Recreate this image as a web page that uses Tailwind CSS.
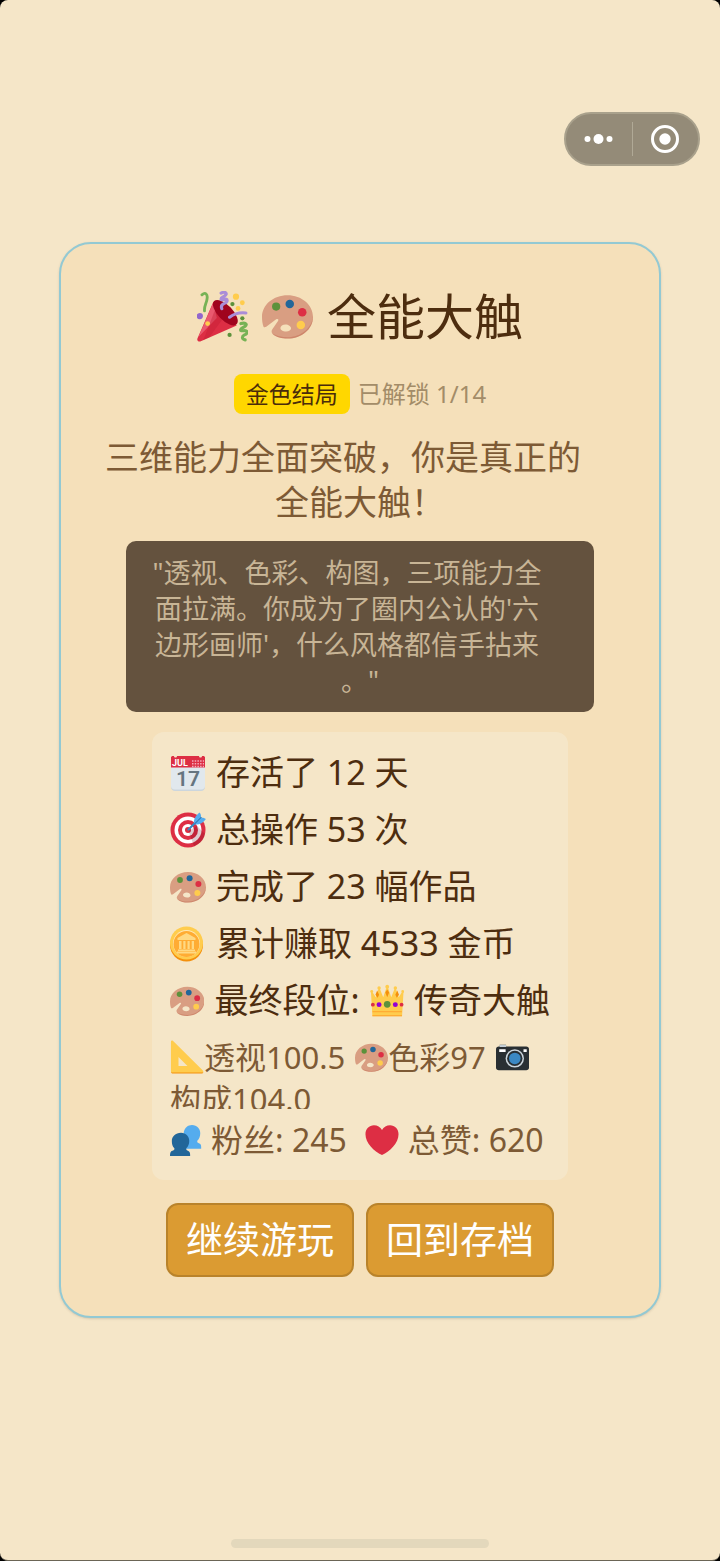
<!DOCTYPE html>
<html lang="zh-CN">
<head>
  <meta charset="UTF-8">
  <meta name="viewport" content="width=device-width, initial-scale=1.0">
  <title>全能大触</title>
  <script src="https://cdn.jsdelivr.net/npm/@tailwindcss/browser@4"></script>
</head>
<body class="bg-black font-['Noto_Sans','Noto_Sans_CJK_SC',sans-serif]">
  <!-- Palette is used in several rows -->
  <svg class="hidden" aria-hidden="true">
    <symbol id="palette" viewBox="0 0 36 36">
      <path fill="#d99e82" fill-rule="evenodd" d="M18 3C8 3 0 9.800 0 18.200c0 2.500.3 5 1 6.800.4.9 1.200.7 2 .3l7-5.300c1.200-.7 2 0 1.300 1.200L7.300 27c-.9 1.300-.6 2.500.5 3.700C10 32.600 14 33.600 18 33.600c10 0 18-6.800 18-15.300S28 3 18 3zm-1 25.600c-2.200 0-4-1.100-4-2.500s1.600-2.500 3.600-2.500 3.900 1.300 3.900 2.700-1.400 2.300-3.500 2.300z"/>
      <path fill="#c1694f" d="M7.300 30c2.600 2.600 6.600 3.600 10.700 3.600 10 0 18-6.800 18-15.300v-.7C35.500 25.700 27.700 32.600 18 32.600c-4.200 0-8-.9-10.700-2.600z" opacity=".45"/>
      <circle cx="10" cy="11" r="2.900" fill="#5c913b"/>
      <circle cx="19.600" cy="9.200" r="3" fill="#226699"/>
      <circle cx="28.400" cy="15" r="3" fill="#dd2e44"/>
      <circle cx="27.400" cy="24" r="3" fill="#ffcc4d"/>
    </symbol>
  </svg>

  <main class="flex min-h-screen flex-col rounded-lg border-b border-[#6b6556] bg-[#f5e6c8]">
    <header class="flex justify-end px-5 pt-[112px]">
      <div class="flex h-[54px] w-[136px] items-center rounded-full border-2 border-[#a9a18c] bg-[#948b78]">
        <button class="flex h-full flex-1 items-center justify-center" aria-label="更多">
          <svg width="30" height="12" viewBox="0 0 30 12" fill="#fff"><circle cx="3.500" cy="6" r="3"/><circle cx="14.500" cy="6" r="5"/><circle cx="25.500" cy="6" r="3"/></svg>
        </button>
        <span class="h-[34px] w-px bg-[#b0a996]"></span>
        <button class="flex h-full flex-1 items-center justify-center" aria-label="关闭">
          <svg width="28" height="28" viewBox="0 0 28 28"><circle cx="14" cy="14" r="12.500" fill="none" stroke="#fff" stroke-width="3"/><circle cx="14" cy="14" r="5.700" fill="#fff"/></svg>
        </button>
      </div>
    </header>

    <section class="mx-[59px] mt-[76px] flex flex-col items-center rounded-[32px] border-2 border-[#93c9d3] bg-[#f5e0ba] pt-[42px] pb-[39px] shadow-sm">
      <h1 class="flex h-[60px] items-center gap-[14px] text-[49px] leading-[60px] text-[#4d2d0f]">
        <svg class="size-[51px]" viewBox="0 0 36 36" aria-hidden="true">
          <path fill="#dd2e44" d="M11.600 7.500L.3 33.600c-.5 1.300.7 2.400 2 2L28 24.300z"/>
          <path fill="#ea596e" d="M11.600 8L1 32.500 14 19z"/>
          <path fill="#be1931" d="M13 12.500L4.500 34.500l4-1.700L18 20z" opacity=".35"/>
          <ellipse cx="20" cy="15.300" rx="11.400" ry="5.200" fill="#a0041e" transform="rotate(46 20 15.300)"/>
          <path fill="none" stroke="#77b255" stroke-width="2" stroke-linecap="round" d="M3.500 2.700C6 .5 7.600 2.300 7.100 5.500 6.700 9 5 10 5.300 14"/>
          <path fill="none" stroke="#aa8dd8" stroke-width="2.200" stroke-linecap="round" stroke-linejoin="round" d="M17 1.500c3-1.500 5 .5 2.500 2-3 1.500-3.500 3.500-.5 2.500 3-1 3 1.500.3 2.700-3 1.300-2 3-1.800 3.800M23 18.500c4-3 7-3.500 11.500-3"/>
          <path fill="none" stroke="#77b255" stroke-width="2.200" stroke-linecap="round" stroke-linejoin="round" d="M31 23c4-1 5 1 2 2.500-3 1.500-3 3 0 2.500 3-.5 3 2 .5 3-2 1-2 3 .5 3.500"/>
          <circle cx="2" cy="17.700" r="2.200" fill="#9266cc"/>
          <circle cx="27.500" cy="4" r="2.200" fill="#ffcc4d"/>
          <circle cx="32" cy="8.300" r="1.700" fill="#ffcc4d"/>
          <circle cx="29" cy="12.300" r="1.700" fill="#ffcc4d"/>
          <circle cx="7.500" cy="23" r="1.700" fill="#ffcc4d"/>
          <circle cx="25" cy="9.200" r="1.500" fill="#5c913b"/>
          <circle cx="32" cy="19.300" r="1.500" fill="#5c913b"/>
          <circle cx="23" cy="31" r="1.500" fill="#5c913b"/>
        </svg>
        <svg class="size-[51px]" aria-hidden="true"><use href="#palette"/></svg>
        <span>全能大触</span>
      </h1>

      <div class="mt-7 flex h-10 items-center gap-2">
        <span class="rounded-lg bg-[#ffd700] px-3 text-[23px] leading-10 text-[#4a2c0a]">金色结局</span>
        <span class="text-[24px] leading-10 text-[#a38c68]">已解锁 1/14</span>
      </div>

      <p class="mt-[21px] text-center text-[34px] leading-[45px] text-[#7d5a35]">
        <span class="block pr-[34px]">三维能力全面突破，你是真正的</span>
        <span class="block">全能大触！</span>
      </p>

      <blockquote class="mt-4 w-[468px] rounded-[10px] bg-[#64523e] pt-[14px] pb-[13px] text-center text-[27px] leading-9 text-[#c8b596]">
        <span class="block pr-[26px]">"透视、色彩、构图，三项能力全</span>
        <span class="block pr-[26px]">面拉满。你成为了圈内公认的'六</span>
        <span class="block pr-[26px]">边形画师'，什么风格都信手拈来</span>
        <span class="block">。"</span>
      </blockquote>

      <div class="mt-5 w-[416px] rounded-xl bg-[#f5e6c8] px-[18px] pt-3 pb-[19px] whitespace-nowrap">
        <ul class="text-[34px] leading-[57px] text-[#4d2d0f]">
          <li class="flex items-center gap-[10px]">
            <svg class="size-9" viewBox="0 0 36 36" aria-hidden="true">
              <path fill="#ccd6dd" d="M1 11h34v21c0 2-1.500 4-4 4H5c-2.500 0-4-2-4-4z"/>
              <path fill="#e1e8ed" d="M1 11h34v20c0 2-1.500 3.500-4 3.500H5c-2.500 0-4-1.500-4-3.500z"/>
              <path fill="#dd2e44" d="M1 2.500C1 1.500 2 1 3 1h1c0 2 3 2 3 0h22c0 2 3 2 3 0h1c1 0 2 .5 2 1.500V12.500H1z"/>
              <text x="2" y="11" font-size="9" font-weight="700" font-family="Roboto" fill="#fff">JUL</text>
              <path stroke="#f4abba" stroke-width="1.500" stroke-dasharray="1.500 1.200" d="M22 6h12M22 8.700h12M22 11.400h12"/>
              <text x="18" y="30.500" text-anchor="middle" font-size="21" font-weight="600" font-family="Roboto" fill="#66757f">17</text>
            </svg>
            <span>存活了 12 天</span>
          </li>
          <li class="flex items-center gap-[10px]">
            <svg class="size-9" viewBox="0 0 36 36" aria-hidden="true">
              <circle cx="18" cy="18" r="17.500" fill="#dd2e44"/>
              <circle cx="18" cy="18" r="13.500" fill="#fff"/>
              <circle cx="18" cy="18" r="10" fill="#dd2e44"/>
              <circle cx="18" cy="18" r="6" fill="#fff"/>
              <circle cx="18" cy="18" r="3" fill="#dd2e44"/>
              <path d="M18.500 19L27 14l8 8c-1 5-5 10-11 12z" fill="#58000e" opacity=".2"/>
              <path stroke="#3a87c2" stroke-width="2.200" stroke-linecap="round" d="M18.500 17.500l9-9"/>
              <path fill="#55acee" d="M24 11.500c-.5-4 1.500-8 5.500-11 1.300 1 1.800 3 1.500 5.300 2.300-.2 4 .3 4.800 1.500-3 4-6.800 5.800-10.800 5.200z"/>
              <path stroke="#269" stroke-width="1" d="M24.500 12l7-7"/>
            </svg>
            <span>总操作 53 次</span>
          </li>
          <li class="flex items-center gap-[10px]">
            <svg class="size-9" aria-hidden="true"><use href="#palette"/></svg>
            <span>完成了 23 幅作品</span>
          </li>
          <li class="flex items-center gap-[10px]">
            <svg class="size-9" viewBox="0 0 36 36" aria-hidden="true">
              <circle cx="16.500" cy="19" r="16.500" fill="#f4900c"/>
              <circle cx="16.500" cy="17" r="16.500" fill="#ffcc4d"/>
              <circle cx="16.500" cy="17.500" r="13.500" fill="#ffe8b6"/>
              <circle cx="16.500" cy="18" r="13" fill="#ffac33"/>
              <path fill="#ffd983" d="M16.500 7L7.500 12v2h18v-2zM9 15h2.500v8H9zm4.300 0h2.200v8h-2.200zm4.200 0h2.200v8h-2.200zm4.200 0H24v8h-2.300zM8 23.500h17V25H8zm-1 2h19v2H7z"/>
            </svg>
            <span>累计赚取 4533 金币</span>
          </li>
          <li class="flex items-center gap-[10px]">
            <svg class="size-9" aria-hidden="true"><use href="#palette"/></svg>
            <span>最终段位:</span>
            <svg class="size-9" viewBox="0 0 36 36" aria-hidden="true">
              <path fill="#ffcc4d" d="M2.500 34L1 8.500h1.500L6 14l3-9h1.200l3.600 9L17.500 3h1l3.700 11 3.600-9H27l3 9 3.500-5.500H35L33.500 34z"/>
              <circle cx="1.800" cy="8" r="1.500" fill="#ffcc4d"/><circle cx="9.500" cy="4.500" r="1.800" fill="#ffcc4d"/><circle cx="18" cy="3" r="2" fill="#ffcc4d"/><circle cx="26.500" cy="4.500" r="1.800" fill="#ffcc4d"/><circle cx="34.200" cy="8" r="1.500" fill="#ffcc4d"/>
              <path fill="#f4900c" d="M7.500 7l2 4.500-1.500 3-2.300-3zM16 9l2-3 2 3-2 5zM28.500 7l-2 4.500 1.500 3 2.300-3z"/>
              <path fill="#ffac33" d="M2.700 28.500h30.600v1.300H2.700zM2.600 32.700h30.800V34H2.600z"/>
              <circle cx="18" cy="21.500" r="3.500" fill="#5c913b"/>
              <circle cx="9.500" cy="21.800" r="2.600" fill="#9400d3"/><circle cx="26.500" cy="21.800" r="2.600" fill="#9400d3"/>
              <circle cx="3" cy="21.800" r="2" fill="#dd2e44"/><circle cx="33" cy="21.800" r="2" fill="#dd2e44"/>
            </svg>
            <span>传奇大触</span>
          </li>
        </ul>

        <div class="mt-[7px] h-[73px] overflow-hidden text-[31px] leading-[42px] text-[#7d5a35]">
          <div class="flex items-center">
            <svg class="size-[34px]" viewBox="0 0 36 36" aria-hidden="true">
              <path fill="#ffcc4d" fill-rule="evenodd" d="M1 2c0-1.500 1.200-2 2.300-1L34.500 32c1.500 1.500.8 3-1 3H3c-1.200 0-2-.8-2-2zm8 16v9.500h9.500z"/>
              <path fill="#f4900c" d="M1 33c0 1.500.8 2.500 2 2.500h30.500c1.200 0 1.800-.8 1.700-1.700-.3.500-.9.700-1.700.7H3c-1.200 0-2-.6-2-1.500z"/>
            </svg>
            <span>透视100.5</span>
            <svg class="ml-[10px] size-[33px]" aria-hidden="true"><use href="#palette"/></svg>
            <span>色彩97</span>
            <svg class="ml-[10px] size-[33px]" viewBox="0 0 36 36" aria-hidden="true">
              <path fill="#66757f" d="M4 4h7v5H4z"/>
              <path fill="#292f33" d="M3 6h30c1.700 0 3 1.200 3 3v20c0 1.800-1.300 3-3 3H3c-1.700 0-3-1.200-3-3V9c0-1.800 1.300-3 3-3z"/>
              <path fill="#ccd6dd" d="M4 4.500h7v2H4z"/>
              <path fill="#fff" d="M3.500 9h7v3h-7zM30 9h3.500v3H30z"/>
              <circle cx="20.500" cy="19" r="10" fill="#ccd6dd"/>
              <circle cx="20.500" cy="19" r="8.400" fill="#292f33"/>
              <circle cx="20.500" cy="19" r="6.300" fill="#3b88c3"/>
            </svg>
          </div>
          <div>构成104.0</div>
        </div>

        <div class="mt-[10px] flex items-center text-[32px] leading-[42px] text-[#7d5a35]">
          <svg class="mr-2 size-[33px]" viewBox="0 0 36 36" aria-hidden="true">
            <path fill="#55acee" d="M24 1c5.500 0 9 4 9 9 0 3.500-1.200 6.200-3 8-.8 1.200-.3 2.500 1.500 3 1.900.6 2.500 1.700 2.500 4v2H15V9c1-5 4.500-8 9-8z"/>
            <path fill="#226699" d="M12 9.500c5.500 0 9 4 9 9 0 3.300-1.200 6-3 7.800-.8 1.200-.2 2.400 1.500 2.900 2.200.7 2.500 2.500 2.500 5.800H0c0-3.600.5-5.200 2.700-5.800 2-.5 2.800-1.700 1.800-2.900-1.800-1.800-2.500-4.500-2.500-7.800 0-5 4-9 10-9z"/>
          </svg>
          <span>粉丝: 245</span>
          <svg class="mr-[9px] ml-[18px] size-[34px]" viewBox="0 0 36 36" aria-hidden="true">
            <path fill="#dd2e44" d="M35.500 11.800c0-5.300-4-9.300-9-9.300-3.500 0-6.800 2-8.500 5-1.700-3-5-5-8.500-5-5 0-9 4-9 9.300C.5 21.500 9.500 29.500 18 34c8.500-4.500 17.500-12.500 17.500-22.200z"/>
          </svg>
          <span>总赞: 620</span>
        </div>
      </div>

      <div class="mt-[23px] flex gap-3 text-[37px] leading-[70px] text-white">
        <button class="rounded-xl border-2 border-[#b9832b] bg-[#db9b32] px-[18px]">继续游玩</button>
        <button class="rounded-xl border-2 border-[#b9832b] bg-[#db9b32] px-[18px]">回到存档</button>
      </div>
    </section>

    <div class="mx-auto mt-auto mb-3 h-[9px] w-[258px] rounded-full bg-[#e3d8bc]"></div>
  </main>
</body>
</html>
